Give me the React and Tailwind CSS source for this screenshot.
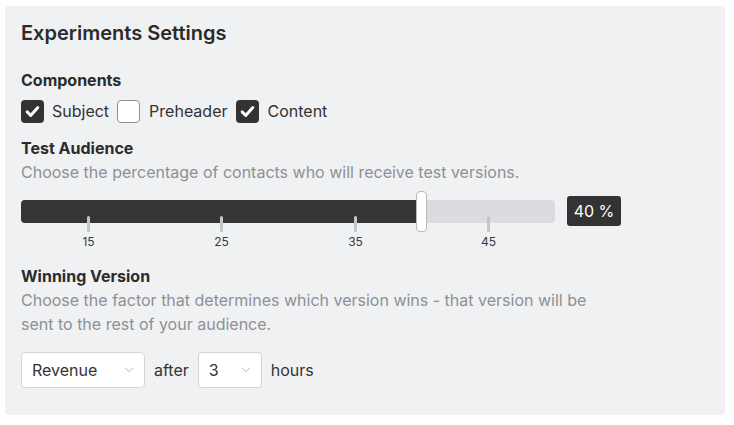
import React from 'react';
import { ChevronDown } from 'lucide-react';

function Box({ checked }) {
  return checked ? (
    <span className="flex h-[23px] w-[23px] items-center justify-center rounded-[4px] bg-[#333333]">
      <svg width="17" height="17" viewBox="0 0 24 24" fill="none" stroke="white" strokeWidth="4.2" strokeLinecap="round" strokeLinejoin="round">
        <polyline points="4.5,12.5 9.5,17.5 19.5,6.5" />
      </svg>
    </span>
  ) : (
    <span className="h-[23px] w-[23px] rounded-[4px] border border-[#8e9196] bg-white" />
  );
}

function Select({ value, width }) {
  return (
    <div className={`flex h-[36px] items-center justify-between rounded-[4px] border border-[#d3d5d9] bg-white pl-[10px] pr-[10px] text-[16px] text-[#333] ${width}`}>
      <span>{value}</span>
      <ChevronDown size={14} strokeWidth={1.5} className="-mr-[2px] text-[#a9acb1]" />
    </div>
  );
}

const ticks = [
  { label: '15', left: 'left-[66px]' },
  { label: '25', left: 'left-[199px]' },
  { label: '35', left: 'left-[333px]' },
  { label: '45', left: 'left-[466px]' },
];

export default function App() {
  return (
    <div className="min-h-[425px] bg-white pl-[5px] pt-[6px] font-['Inter',sans-serif] text-[#2b2b2b]">
      <div className="w-[720px] rounded-[4px] bg-[#f0f1f3] px-[16px] pb-[27px] pt-[15px]">
        <div className="text-[20px] font-semibold leading-[24px]">Experiments Settings</div>

        <div className="mt-[25px] text-[16px] font-bold leading-[20px]">Components</div>
        <div className="mt-[10px] flex items-center text-[16px] leading-[23px] text-[#333]">
          <Box checked />
          <span className="ml-[8px] mr-[8px]">Subject</span>
          <Box />
          <span className="ml-[9px] mr-[8px]">Preheader</span>
          <Box checked />
          <span className="ml-[9px]">Content</span>
        </div>

        <div className="mt-[15px] text-[16px] font-bold leading-[20px]">Test Audience</div>
        <div className="mt-[2px] text-[16px] leading-[24px] text-[#8d9095]">
          Choose the percentage of contacts who will receive test versions.
        </div>

        <div className="mt-[12px] flex h-[30px] items-center">
          <div className="relative h-[23px] w-[534px] rounded-[4px] bg-[#dbdce0]">
            <div className="h-full w-[400px] rounded-l-[4px] bg-[#353535]" />
            {ticks.map((t) => (
              <div key={t.label} className={`absolute top-[16px] ${t.left}`}>
                <div className="h-[16px] w-[3px] rounded-full bg-[#c3c5c9]" />
                <div className="absolute left-1/2 top-[19px] -translate-x-1/2 text-[12px] leading-[14px] text-[#3a3a3a]">
                  {t.label}
                </div>
              </div>
            ))}
            <div className="absolute left-[395px] top-[-9px] h-[41px] w-[11px] rounded-[4px] border border-[#b9bbbf] bg-white" />
          </div>
          <div className="ml-[12px] flex h-[30px] w-[54px] items-center justify-center rounded-[3px] bg-[#333333] text-[16px] text-white">
            40 %
          </div>
        </div>

        <div className="mt-[40px] text-[16px] font-bold leading-[20px]">Winning Version</div>
        <div className="mt-[2px] text-[16px] leading-[24px] text-[#8d9095]">
          Choose the factor that determines which version wins - that version will be
          <br />
          sent to the rest of your audience.
        </div>

        <div className="mt-[16px] flex items-center text-[16px] text-[#333]">
          <Select value="Revenue" width="w-[124px]" />
          <span className="mx-[9px]">after</span>
          <Select value="3" width="w-[64px]" />
          <span className="ml-[9px]">hours</span>
        </div>
      </div>
    </div>
  );
}
